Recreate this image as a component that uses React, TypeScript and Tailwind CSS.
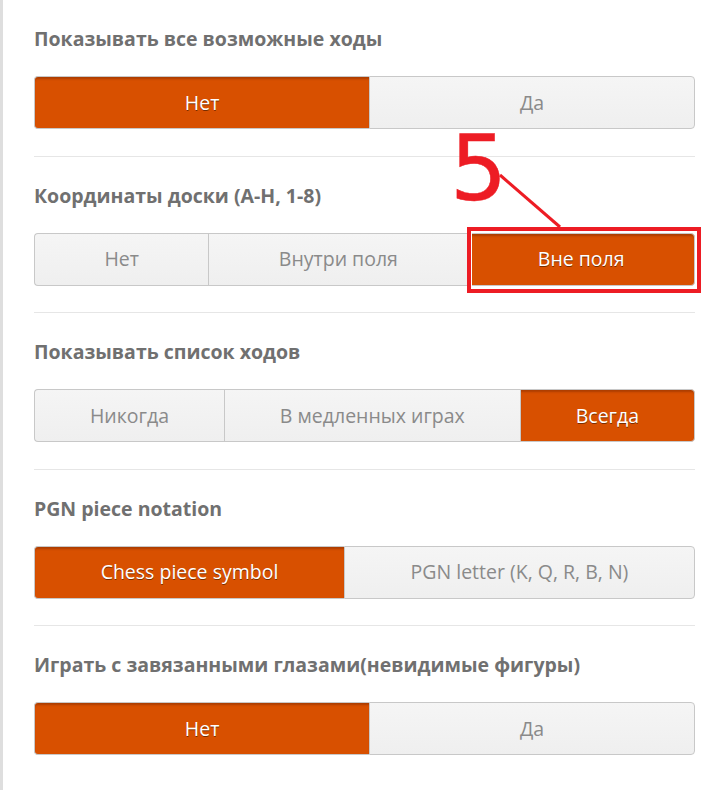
import React from "react";

type Section = { title: string; options: string[]; active: number };

const sections: Section[] = [
  { title: "Показывать все возможные ходы", options: ["Нет", "Да"], active: 0 },
  { title: "Координаты доски (A-H, 1-8)", options: ["Нет", "Внутри поля", "Вне поля"], active: 2 },
  { title: "Показывать список ходов", options: ["Никогда", "В медленных играх", "Всегда"], active: 2 },
  { title: "PGN piece notation", options: ["Chess piece symbol", "PGN letter (K, Q, R, B, N)"], active: 0 },
  { title: "Играть с завязанными глазами(невидимые фигуры)", options: ["Нет", "Да"], active: 0 },
];

function Group({ s, idx }: { s: Section; idx: number }) {
  return (
    <div className="flex h-[53px] w-full">
      {s.options.map((o, i) => {
        const active = i === s.active;
        const first = i === 0;
        const last = i === s.options.length - 1;
        const highlighted = idx === 1 && active;
        return (
          <div
            key={o}
            className={
              "relative flex flex-auto items-center justify-center px-4 text-[19.5px] border-y border-[#c8c8c8] " +
              (first ? "rounded-l-[4px] border-l " : "") +
              (last ? "rounded-r-[4px] border-r " : "") +
              (!first ? "border-l " : "") +
              (active
                ? "bg-[#d85000] text-white [text-shadow:0_1px_0_rgba(0,0,0,0.45)] shadow-[inset_0_3px_2px_-1px_rgba(120,40,0,0.45)]"
                : "bg-gradient-to-b from-[#f5f5f5] to-[#efefef] text-[#8a8a8a]")
            }
          >
            {o}
            {highlighted && (
              <div className="pointer-events-none absolute -left-[1px] -right-[7px] -top-[7px] -bottom-[8px] border-[4px] border-[#ed1c24]">
                <div className="h-full w-full border border-white"></div>
              </div>
            )}
          </div>
        );
      })}
    </div>
  );
}

export default function App() {
  return (
    <div
      className="relative min-h-[790px] w-[726px] overflow-hidden bg-white border-l-[3px] border-[#dedede]"
      style={{ fontFamily: '"Open Sans", "Noto Sans", sans-serif' }}
    >
      <div className="pl-[31px] pr-[31px]">
        {sections.map((s, idx) => (
          <div key={s.title} className={"pt-[25px] pb-[26.5px] " + (idx < sections.length - 1 ? "border-b border-[#e6e6e6]" : "")}>
            <div className="h-[27px] text-[19.5px] font-bold leading-[27px] text-[#707070]">{s.title}</div>
            <div className="mt-[24px]">
              <Group s={s} idx={idx} />
            </div>
          </div>
        ))}
      </div>
      <div
        className="pointer-events-none absolute left-[447px] top-[124px] text-[90px] font-normal leading-none text-[#ed1c24] [-webkit-text-stroke:0.5px_#ed1c24]"
        style={{ fontFamily: '"DejaVu Sans", sans-serif' }}
      >
        5
      </div>
      <svg className="pointer-events-none absolute left-0 top-0" width="726" height="790">
        <line x1="497" y1="175" x2="557" y2="227" stroke="#ed1c24" strokeWidth="3" />
      </svg>
    </div>
  );
}
